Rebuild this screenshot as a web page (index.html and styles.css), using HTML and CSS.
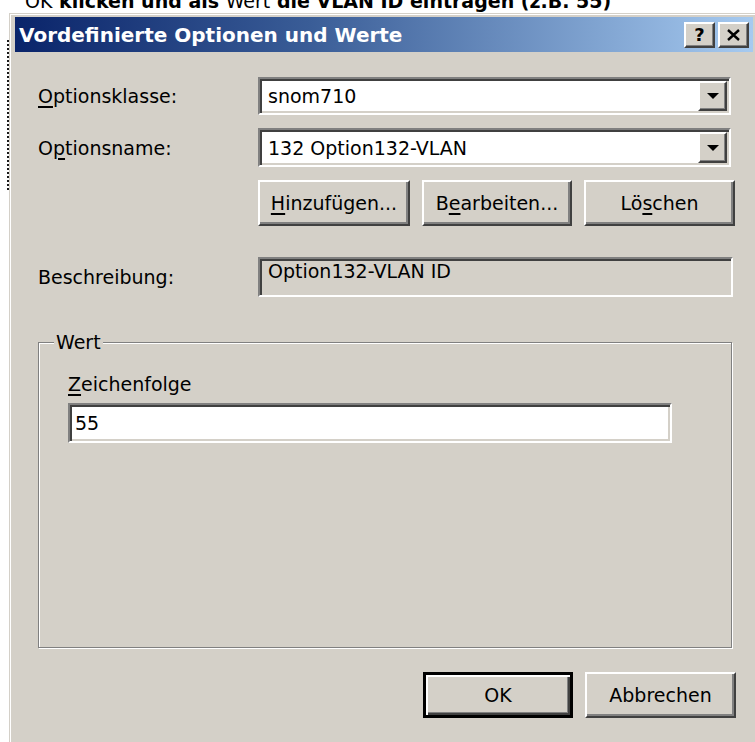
FILE: index.html
```html
<!DOCTYPE html>
<html lang="de">
<head>
<meta charset="utf-8">
<title>Vordefinierte Optionen und Werte</title>
<link rel="stylesheet" href="styles.css">
</head>
<body>
<div class="note"><span class="note-text"><span class="plain">OK</span> klicken und als <span class="plain">Wert</span> die VLAN ID eintragen (z.B. 55)</span></div>
<div class="stage">
  <div class="edge"></div>
  <div class="window">
    <div class="titlebar">
      <span class="title">Vordefinierte Optionen und Werte</span>
      <div class="caption-buttons">
        <span class="cap-btn cap-help">?</span>
        <span class="cap-btn cap-close">
          <svg width="13" height="12" viewBox="0 0 13 12"><path d="M1 1 L12 11 M12 1 L1 11" stroke="#000" stroke-width="2.4" fill="none"/></svg>
        </span>
      </div>
    </div>
    <div class="content">
      <div class="row">
        <span class="label"><u>O</u>ptionsklasse:</span>
        <div class="combo">
          <span class="combo-text">snom710</span>
          <span class="drop"><span class="arrow"></span></span>
        </div>
      </div>
      <div class="row">
        <span class="label">O<u>p</u>tionsname:</span>
        <div class="combo">
          <span class="combo-text">132 Option132-VLAN</span>
          <span class="drop"><span class="arrow"></span></span>
        </div>
      </div>
      <div class="row row-buttons">
        <span class="btn btn-narrow"><u>H</u>inzufügen...</span>
        <span class="btn btn-wide">B<u>e</u>arbeiten...</span>
        <span class="btn btn-last">Lö<u>s</u>chen</span>
      </div>
      <div class="row row-desc">
        <span class="label">Beschreibung:</span>
        <div class="field field-readonly">Option132-VLAN ID</div>
      </div>
      <fieldset class="group">
        <legend class="group-title">Wert</legend>
        <div class="group-label"><u>Z</u>eichenfolge</div>
        <div class="field field-input">55</div>
      </fieldset>
      <div class="footer">
        <span class="btn btn-default">OK</span>
        <span class="btn btn-last">Abbrechen</span>
      </div>
    </div>
  </div>
</div>
</body>
</html>
```

FILE: styles.css
```css
* {
  box-sizing: border-box;
}

html,
body {
  margin: 0;
  height: 100%;
  overflow: hidden;
}

body {
  background: #ffffff;
  font-family: "DejaVu Sans", sans-serif;
  font-size: 19px;
  color: #000000;
}

u {
  text-decoration-thickness: 2px;
  text-underline-offset: 3px;
}

/* instruction line of the page behind the dialog, cut off at the top */
.note {
  height: 13px;
  overflow: hidden;
  padding-left: 25px;
  font-weight: bold;
  font-size: 19px;
}

.note-text {
  display: block;
  margin-top: -10px;
  line-height: 22px;
  white-space: nowrap;
}

.plain {
  font-weight: normal;
}

.stage {
  display: flex;
  align-items: flex-start;
  height: 729px;
}

/* dotted rule of the page behind */
.edge {
  width: 9px;
  height: 150px;
  margin-top: 27px;
  border-right: 2px dotted #1a1a1a;
  flex: none;
}

/* dialog window */
.window {
  flex: 1;
  height: 100%;
  background: #d4d0c8;
  border-top: 1px solid #d4d0c8;
  border-left: 1px solid #d4d0c8;
  box-shadow: inset 1px 1px 0 #ffffff;
  padding: 3px 2px 0 5px;
}

.titlebar {
  height: 35px;
  display: flex;
  align-items: center;
  justify-content: space-between;
  padding: 0 4px 0 4px;
  background: linear-gradient(to right, #0a246a 0%, #3a5d97 40%, #a6caf0 100%);
}

.title {
  color: #ffffff;
  font-weight: bold;
  font-size: 20px;
  white-space: nowrap;
}

.caption-buttons {
  display: flex;
  gap: 3px;
}

.cap-btn {
  width: 31px;
  height: 26px;
  display: flex;
  align-items: center;
  justify-content: center;
  background: #d4d0c8;
  border: 2px solid;
  border-color: #ffffff #404040 #404040 #ffffff;
  box-shadow: inset -1px -1px 0 #808080;
  font-weight: bold;
  font-size: 18px;
  line-height: 1;
}

/* form body */
.content {
  padding: 25px 17px 0 23px;
}

.row {
  display: flex;
  align-items: center;
}

.row + .row {
  margin-top: 13px;
}

.row-desc.row {
  margin-top: 31px;
}

.label {
  width: 220px;
  flex: none;
  white-space: nowrap;
}

/* sunken 3D frame shared by combo boxes and edit fields */
.combo,
.field {
  border: 2px solid;
  border-color: #808080 #ffffff #ffffff #808080;
  box-shadow: inset 2px 2px 0 #404040, inset -2px -2px 0 #d4d0c8;
}

.combo {
  width: 473px;
  height: 38px;
  background: #ffffff;
  display: flex;
  align-items: center;
  padding: 2px 2px 2px 8px;
}

.row + .row .combo {
  height: 39px;
}

.combo-text {
  flex: 1;
  white-space: nowrap;
}

.drop {
  width: 29px;
  height: 100%;
  display: flex;
  align-items: center;
  justify-content: center;
  background: #d4d0c8;
  border: 2px solid;
  border-color: #ffffff #404040 #404040 #ffffff;
  box-shadow: inset -1px -1px 0 #808080;
}

.arrow {
  width: 0;
  height: 0;
  border-left: 6px solid transparent;
  border-right: 6px solid transparent;
  border-top: 6px solid #000000;
}

/* raised push buttons */
.btn {
  height: 46px;
  display: flex;
  align-items: center;
  justify-content: center;
  background: #d4d0c8;
  border: 2px solid;
  border-color: #ffffff #404040 #404040 #ffffff;
  box-shadow: inset -2px -2px 0 #808080;
  white-space: nowrap;
}

.row-buttons {
  padding-left: 220px;
  gap: 12px;
}

.btn-narrow {
  width: 152px;
}

.btn-wide {
  width: 150px;
}

.btn-last {
  width: 151px;
}

.btn-default {
  width: 150px;
  border: 3px solid;
  border-color: #000000;
  box-shadow: inset 2px 2px 0 #ffffff, inset -2px -2px 0 #404040, inset -3px -3px 0 #808080;
}

.field {
  padding: 2px 8px;
}

.field-readonly {
  width: 475px;
  height: 40px;
  background: #d4d0c8;
  padding-top: 1px;
}

.field-input {
  width: 604px;
  height: 40px;
  background: #ffffff;
  display: flex;
  align-items: center;
  padding-left: 5px;
  margin-left: 29px;
}

/* etched group box */
.group {
  margin: 34px 0 0;
  width: 694px;
  height: 317px;
  padding: 0;
  border: 1px solid #808080;
  box-shadow: inset 1px 1px 0 #ffffff, 1px 1px 0 #ffffff;
  min-width: 0;
}

.group-title {
  margin-left: 15px;
  padding: 0 2px;
  line-height: 22px;
  background: #d4d0c8;
}

.group-label {
  margin: 20px 0 8px 29px;
  line-height: 22px;
}

.footer {
  display: flex;
  justify-content: flex-end;
  gap: 12px;
  margin-top: 24px;
}
```
